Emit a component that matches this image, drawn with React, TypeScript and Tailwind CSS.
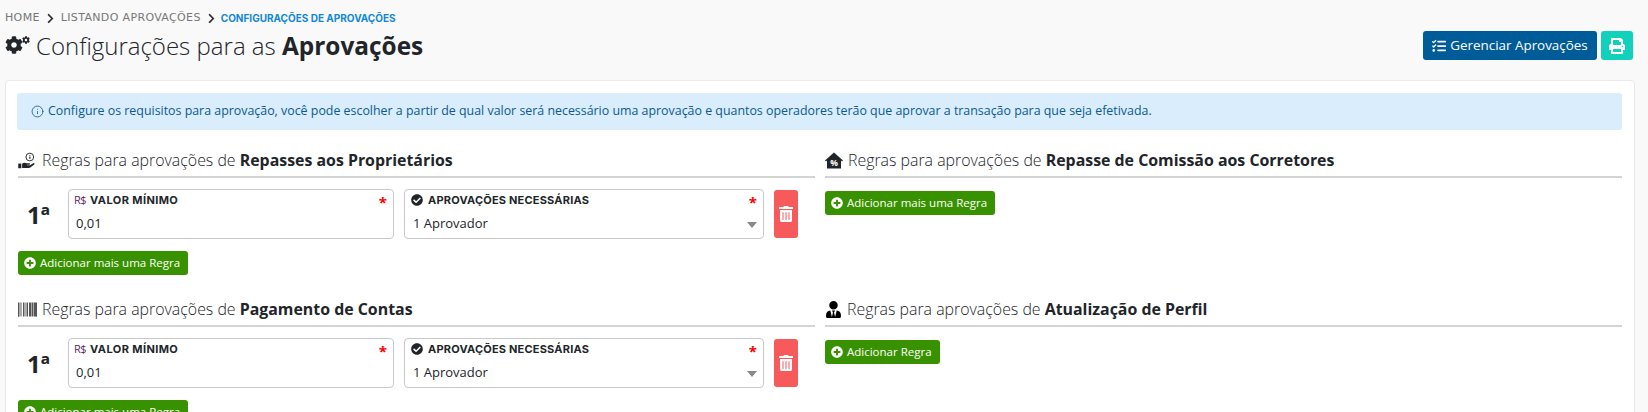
import { FaCog, FaTasks, FaPrint, FaPlusCircle, FaTrashAlt, FaCheckCircle, FaBarcode, FaUserTie, FaChevronRight } from 'react-icons/fa';
import { Info } from 'lucide-react';

const sans = 'font-["Open_Sans","Noto_Sans",sans-serif]';
const label = 'font-["Inter",sans-serif] text-[11px] font-bold text-[#212529]';

function HandCoin() {
  return (
    <svg viewBox="0 0 24 22" className="w-[19px] h-[17px] text-[#212529]">
      <circle cx="15" cy="6.5" r="5" fill="none" stroke="currentColor" strokeWidth="1.2" />
      <path d="M14.4 3.8h1.4v1.2h-1.4zM14.4 5.9h1.4v3.2h-1.4z" fill="currentColor" />
      <rect x="0" y="15" width="4" height="6" fill="currentColor" />
      <path d="M5 15.2c2-1.7 4-1.7 6-.7h3.4c1.2 0 1.2 2 0 2h-3v.6h3.8l4.2-2.6c1.3-.7 2.4.8 1.3 1.8l-5 3.9c-.6.4-1.2.6-2 .6H5z" fill="currentColor" />
    </svg>
  );
}

function HomePercent() {
  return (
    <svg viewBox="0 0 18 16" className="w-[18px] h-[17px] text-[#212529]">
      <path d="M9 0 18 8l-1 1-1-.9V16H2V8.1L1 9 0 8z" fill="currentColor" />
      <text x="9" y="13" textAnchor="middle" fontSize="8.5" fontWeight="700" fill="#fff" fontFamily="Open Sans">%</text>
    </svg>
  );
}

function Heading({ icon, title }: { icon: React.ReactNode; title: string }) {
  return (
    <div className={`flex items-center gap-[5px] h-[30px] pb-[3px] border-b-2 border-[#d4d4d4] text-[15.9px] ${sans}`}>
      {icon}
      <span className="font-light text-[#212529] truncate">
        Regras para aprovações de <b className="font-bold">{title}</b>
      </span>
    </div>
  );
}

function AddButton({ text }: { text: string }) {
  return (
    <button className={`flex items-center gap-[4px] h-[24px] pl-[6px] pr-[8px] rounded-[3px] bg-[#389200] text-white text-[11.5px] ${sans}`}>
      <FaPlusCircle className="text-[12px]" />
      {text}
    </button>
  );
}

function Rule() {
  return (
    <div className="flex items-center mt-[11px] h-[50px] -ml-[1px]">
      <div className={`w-[51px] shrink-0 pl-[10px] pt-[2px] text-[24px] font-bold text-[#212529] leading-none ${sans}`}>1ª</div>
      <div className="relative w-[326px] shrink-0 h-[50px] bg-white border border-[#c9c9c9] rounded-[4px] px-[5px] pt-[3px]">
        <div className={`flex items-center gap-[4px] h-[14px] tracking-[0.4px] ${label}`}>
          <span className={`font-normal text-[#5b2a5b] text-[11px] tracking-[-0.5px] ${sans}`}>R$</span>
          VALOR MÍNIMO
        </div>
        <div className={`mt-[7px] pl-[2px] text-[13px] text-[#212529] ${sans}`}>0,01</div>
        <span className={`absolute right-[6px] top-[1px] text-[#f00] text-[15px] font-bold ${sans}`}>*</span>
      </div>
      <div className="relative w-[360px] shrink-0 ml-[10px] h-[50px] bg-white border border-[#c9c9c9] rounded-[4px] px-[6px] pt-[3px]">
        <div className={`flex items-center gap-[5px] h-[14px] tracking-[0.2px] ${label}`}>
          <FaCheckCircle className="text-[12px]" />
          APROVAÇÕES NECESSÁRIAS
        </div>
        <div className={`mt-[7px] pl-[2px] text-[13px] text-[#212529] ${sans}`}>1 Aprovador</div>
        <span className={`absolute right-[6px] top-[1px] text-[#f00] text-[15px] font-bold ${sans}`}>*</span>
        <span className="absolute right-[6px] top-[32px] border-x-[5px] border-x-transparent border-t-[6px] border-t-[#888]" />
      </div>
      <button className="flex items-center justify-center w-[24px] h-[48px] ml-[10px] rounded-[3px] bg-[#f65a5a] text-white">
        <FaTrashAlt className="text-[16px]" />
      </button>
    </div>
  );
}

export default function App() {
  return (
    <div className={`w-[1648px] h-[412px] overflow-hidden bg-[#f9f9f9] ${sans}`}>
      <div className="px-[5px] pt-[11px]">
        <div className="flex items-center gap-[5px] h-[14px] font-['DejaVu_Sans',sans-serif] text-[11px] tracking-[0.35px] text-[#777]">
          HOME
          <FaChevronRight className="text-[11px] text-[#333]" />
          LISTANDO APROVAÇÕES
          <FaChevronRight className="text-[11px] text-[#333]" />
          <span className="-ml-[1px] font-['Inter',sans-serif] text-[10px] tracking-normal font-bold text-[#1187d6]">CONFIGURAÇÕES DE APROVAÇÕES</span>
        </div>
        <div className="flex items-start justify-between mt-[6px] pr-[10px] h-[49px]">
          <div className="flex items-center gap-[7px] h-[30px] text-[24px] text-[#212529] font-light">
            <span className="flex items-start w-[24px] h-[18px] mb-[3px]">
              <FaCog className="text-[18px] shrink-0" />
              <FaCog className="text-[8px] shrink-0 -ml-[1px]" />
            </span>
            <span>Configurações para as <b className="font-bold text-[24.4px]">Aprovações</b></span>
          </div>
          <div className="flex gap-[4px]">
            <button className="flex items-center gap-[4px] h-[29px] w-[174px] justify-center rounded-[3px] bg-[#005b99] text-white text-[13.4px]">
              <FaTasks className="text-[14px]" />
              Gerenciar Aprovações
            </button>
            <button className="flex items-center justify-center w-[32px] h-[29px] rounded-[3px] bg-[#11d1bd] text-white">
              <FaPrint className="text-[16px]" />
            </button>
          </div>
        </div>
      </div>
      <div className="mx-[5px] w-[1630px] h-[340px] bg-white border border-[#e9e9e9] rounded-t-[4px] pl-[11px] pr-[12px] pt-[12px]">
        <div className="flex items-center gap-[4px] h-[37px] px-[14px] rounded-[3px] bg-[#d9edfc] text-[12.4px] text-[#0b5a8f]">
          <Info className="w-[13px] h-[13px]" strokeWidth={1.5} />
          Configure os requisitos para aprovação, você pode escolher a partir de qual valor será necessário uma aprovação e quantos operadores terão que aprovar a transação para que seja efetivada.
        </div>
        <div className="grid grid-cols-2 gap-x-[10px] mt-[18px] pl-[1px]">
          <div className="h-[149px]">
            <Heading icon={<HandCoin />} title="Repasses aos Proprietários" />
            <Rule />
            <div className="mt-[12px] flex"><AddButton text="Adicionar mais uma Regra" /></div>
          </div>
          <div className="h-[149px]">
            <Heading icon={<HomePercent />} title="Repasse de Comissão aos Corretores" />
            <div className="mt-[13px] flex"><AddButton text="Adicionar mais uma Regra" /></div>
          </div>
          <div>
            <Heading icon={<FaBarcode className="text-[19px]" />} title="Pagamento de Contas" />
            <Rule />
            <div className="mt-[12px] flex"><AddButton text="Adicionar mais uma Regra" /></div>
          </div>
          <div>
            <Heading icon={<FaUserTie className="text-[17px]" />} title="Atualização de Perfil" />
            <div className="mt-[13px] flex"><AddButton text="Adicionar Regra" /></div>
          </div>
        </div>
      </div>
    </div>
  );
}
